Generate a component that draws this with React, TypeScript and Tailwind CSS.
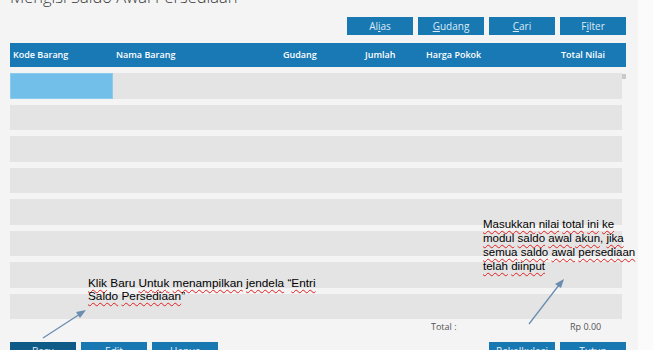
import React from "react";

const W = ({ children }: { children: React.ReactNode }) => (
  <span className="underline decoration-wavy decoration-[#e02020] decoration-[1px] underline-offset-[2px]">{children}</span>
);

const TopBtn = ({ children }: { children: React.ReactNode }) => (
  <div className="w-[66px] h-[18px] bg-[#1878b2] text-[#dcebf6] text-[10px] flex items-center justify-center leading-none">{children}</div>
);

const BotBtn = ({ children, dark }: { children: React.ReactNode; dark?: boolean }) => (
  <div className={`w-[66px] h-[18px] ${dark ? "bg-[#0f5b87]" : "bg-[#1878b2]"} text-[#e6f1f8] text-[10px] flex items-start justify-center pt-[4px] leading-none`}>{children}</div>
);

export default function App() {
  const rows = [0, 1, 2, 3, 4, 5, 6, 7];
  return (
    <div className="relative w-[653px] h-[350px] overflow-hidden bg-[#fbfbfb] font-['Open_Sans',sans-serif]">
      <div className="w-[638px] h-[350px] overflow-hidden bg-[#f4f4f4] pl-[10px] pr-[12px]">
        <div className="h-[17px] overflow-hidden">
          <div className="-mt-[15px] text-[16.5px] font-light text-[#3a3a3a] leading-[24px] whitespace-nowrap">Mengisi Saldo Awal Persediaan</div>
        </div>
        <div className="flex justify-end gap-[5px]">
          <TopBtn>Al<u>i</u>as</TopBtn>
          <TopBtn><u>G</u>udang</TopBtn>
          <TopBtn><u>C</u>ari</TopBtn>
          <TopBtn>F<u>i</u>lter</TopBtn>
        </div>
        <div className="mt-[8px] h-[24px] bg-[#1979b4] flex items-center text-white text-[9px] font-semibold whitespace-nowrap">
          <div className="w-[103px] pl-[3px]">Kode Barang</div>
          <div className="w-[170px] pl-[3px]">Nama Barang</div>
          <div className="w-[82px]">Gudang</div>
          <div className="w-[61px]">Jumlah</div>
          <div className="w-[135px]">Harga Pokok</div>
          <div className="flex-1">Total Nilai</div>
        </div>
        <div className="mt-[6px] flex">
          <div className="flex-1 flex flex-col gap-[6px]">
            {rows.map((r) => (
              <div key={r} className="h-[25.5px] bg-[#e4e4e4] flex">
                {r === 0 && <div className="w-[103px] h-full bg-[#72bfe9] border border-[#8ccbf0]" />}
              </div>
            ))}
          </div>
          <div className="w-[4px] flex flex-col items-center">
            <div className="w-[4px] h-[5px] bg-[#c9c9c9] mt-[1px]" />
          </div>
        </div>
        <div className="h-[15px] flex items-center text-[9px] text-[#555] whitespace-nowrap">
          <div className="w-[421px]" />
          <div className="w-[139px]">Total :</div>
          <div>Rp 0.00</div>
        </div>
        <div className="mt-[8px] flex">
          <div className="flex gap-[5px]">
            <BotBtn dark>Baru</BotBtn>
            <BotBtn>Edit</BotBtn>
            <BotBtn>Hapus</BotBtn>
          </div>
          <div className="flex-1" />
          <div className="flex gap-[5px]">
            <BotBtn>Rekalkulasi</BotBtn>
            <BotBtn>Tutup</BotBtn>
          </div>
        </div>
      </div>

      <div className="absolute left-[88px] top-[277px] text-[11.8px] leading-[13px] text-black font-['Liberation_Sans',sans-serif] whitespace-nowrap">
        <div><W>Klik</W> Baru <W>Untuk</W> <W>menampilkan</W> <W>jendela</W> “<W>Entri</W></div>
        <div><W>Saldo</W> <W>Persediaan</W>”</div>
      </div>
      <div className="absolute left-[483px] top-[217px] text-[11.5px] leading-[14px] text-black font-['Liberation_Sans',sans-serif] whitespace-nowrap">
        <div><W>Masukkan</W> <W>nilai</W> <W>total</W> <W>ini</W> <W>ke</W></div>
        <div><W>modul</W> <W>saldo</W> <W>awal</W> <W>akun</W>, <W>jika</W></div>
        <div><W>semua</W> <W>saldo</W> <W>awal</W> <W>persediaan</W></div>
        <div><W>telah</W> <W>diinput</W></div>
      </div>

      <svg className="absolute left-0 top-0" width="653" height="350" viewBox="0 0 653 350">
        <line x1="43" y1="338" x2="80" y2="314" stroke="#6b8db0" strokeWidth="1.3" />
        <polygon points="86,310 76,312 80,318" fill="#6b8db0" />
        <line x1="529" y1="324" x2="559" y2="285" stroke="#6b8db0" strokeWidth="1.3" />
        <polygon points="564,279 555,284 561,288" fill="#6b8db0" />
      </svg>
    </div>
  );
}
